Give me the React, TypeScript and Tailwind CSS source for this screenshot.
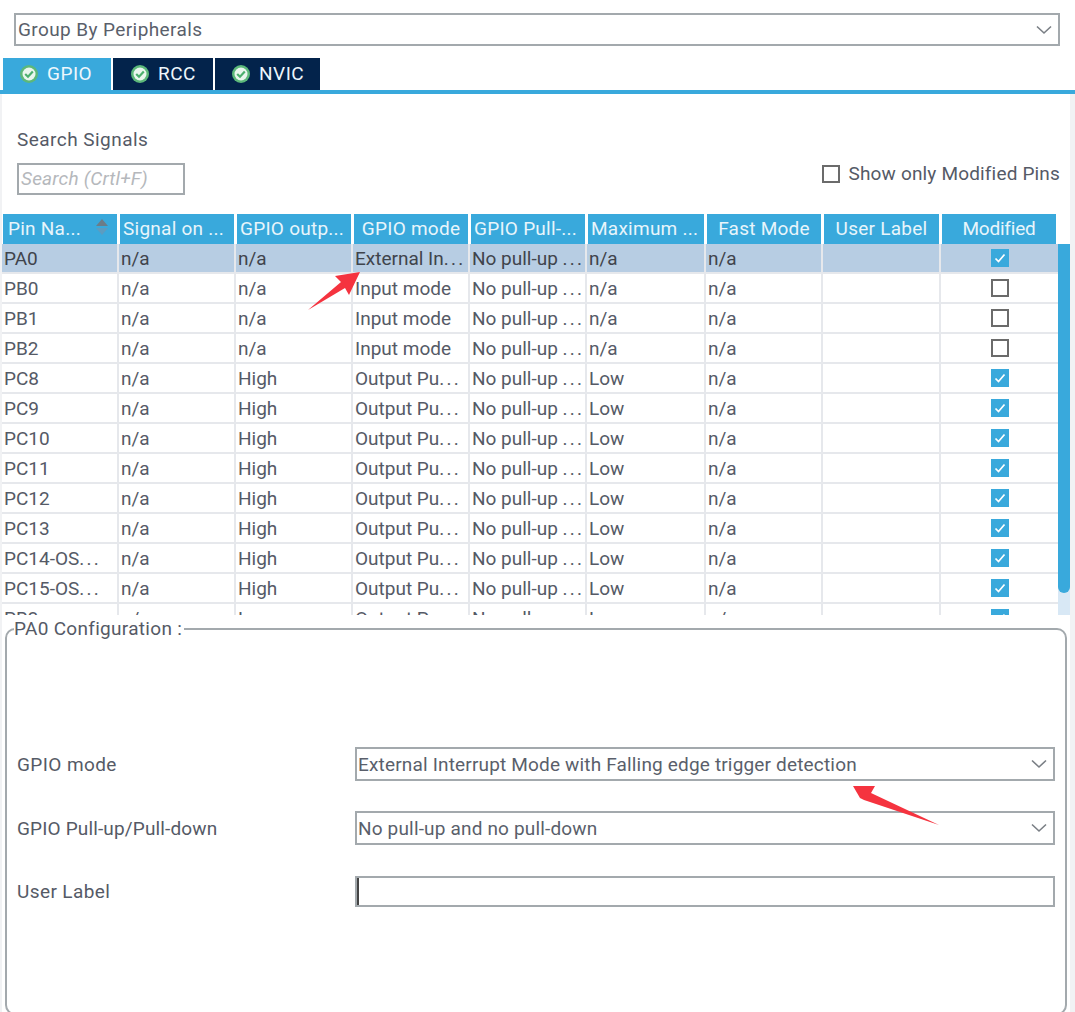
import React from "react";

const Chevron = () => (
  <svg width="18" height="10" viewBox="0 0 18 10" fill="none" stroke="#7a7f85" strokeWidth="1.6">
    <path d="M2 1.5 L9 8 L16 1.5" />
  </svg>
);

const TabIcon = () => (
  <svg width="18" height="18" viewBox="0 0 18 18">
    <circle cx="9" cy="9" r="9" fill="#5cb87a" />
    <circle cx="9" cy="9" r="6.5" fill="#eaf6ee" />
    <path d="M5.2 9 L8 11.7 L12.8 6.6" fill="none" stroke="#4caf6e" strokeWidth="2.2" />
  </svg>
);

const Check = ({ on }: { on: boolean }) =>
  on ? (
    <span className="flex h-[18px] w-[18px] items-center justify-center bg-[#39a9dc]">
      <svg width="14" height="14" viewBox="0 0 14 14" fill="none" stroke="#fff" strokeWidth="1.7">
        <path d="M2.5 7.5 L5.5 10.5 L11.5 3.5" />
      </svg>
    </span>
  ) : (
    <span className="block h-[18px] w-[18px] border-2 border-[#6b6b6b] bg-white" />
  );

const Select = ({ text, className, tracking }: { text: string; className: string; tracking: string }) => (
  <div className={"flex items-center justify-between border-2 border-[#a3a9ad] bg-white pr-[5px] text-[#5a5f6b] " + className}>
    <span className={tracking}>{text}</span>
    <Chevron />
  </div>
);

const Trunc = ({ t }: { t: string }) =>
  t.endsWith("...") ? (
    <>
      {t.slice(0, -3)}
      <span className="tracking-[2.2px]">...</span>
    </>
  ) : (
    <>{t}</>
  );

const widths = ["w-[117px]", "w-[117px]", "w-[117px]", "w-[117px]", "w-[117px]", "w-[119px]", "w-[117px]", "w-[118px]", "w-[117px]"];
const heads = ["Pin Na...", "Signal on ...", "GPIO outp...", "GPIO mode", "GPIO Pull-...", "Maximum ...", "Fast Mode", "User Label", "Modified"];

const out = "Output Pu...";
const pull = "No pull-up ...";
const rows: [string, string, string, string, string, boolean][] = [
  ["PA0", "n/a", "External In...", pull, "n/a", true],
  ["PB0", "n/a", "Input mode", pull, "n/a", false],
  ["PB1", "n/a", "Input mode", pull, "n/a", false],
  ["PB2", "n/a", "Input mode", pull, "n/a", false],
  ["PC8", "High", out, pull, "Low", true],
  ["PC9", "High", out, pull, "Low", true],
  ["PC10", "High", out, pull, "Low", true],
  ["PC11", "High", out, pull, "Low", true],
  ["PC12", "High", out, pull, "Low", true],
  ["PC13", "High", out, pull, "Low", true],
  ["PC14-OS...", "High", out, pull, "Low", true],
  ["PC15-OS...", "High", out, pull, "Low", true],
  ["PB3", "Low", out, pull, "Low", true],
];

export default function App() {
  return (
    <div className="relative h-[1012px] w-[1075px] overflow-hidden bg-white text-[19px] leading-[24px] text-[#555a66]" style={{ fontFamily: "Roboto, 'Liberation Sans', sans-serif" }}>
      <div className="pl-[14px] pt-[13px]">
        <Select text="Group By Peripherals" tracking="tracking-[0.4px]" className="h-[33px] w-[1046px] pl-[2px]" />
      </div>
      <div className="mt-[12px] flex gap-[2px] pl-[3px] tracking-[0.5px] text-[#eef7fc]">
        <div className="flex h-[32px] w-[108px] items-center gap-[9px] bg-[#39a9dc] pl-[17px]"><TabIcon /><span>GPIO</span></div>
        <div className="flex h-[32px] w-[100px] items-center gap-[9px] bg-[#03234b] pl-[18px]"><TabIcon /><span>RCC</span></div>
        <div className="flex h-[32px] w-[105px] items-center gap-[9px] bg-[#03234b] pl-[17px]"><TabIcon /><span>NVIC</span></div>
      </div>
      <div className="h-[4px] bg-[#39a9dc]" />

      <div className="h-[918px] border-l-2 border-r-[5px] border-[#f1f2f4]">
        <div className="flex h-[120px] justify-between pl-[15px] pr-[10px]">
          <div className="pt-[34px]">
            <div className="tracking-[0.46px]">Search Signals</div>
            <div className="mt-[11px] flex h-[32px] w-[168px] items-center border-2 border-[#a3a9ad] pl-[2px] italic tracking-[0.2px] text-[#b5b8bc]">Search (Crtl+F)</div>
          </div>
          <label className="mt-[68px] flex h-[24px] items-center gap-[8px]">
            <span className="block h-[18px] w-[18px] border-2 border-[#6b6b6b]" />
            <span className="tracking-[0.17px]">Show only Modified Pins</span>
          </label>
        </div>

        <div className="relative h-[401px] overflow-hidden">
          <div className="ml-[1px] flex h-[30px] w-[1056px]">
            {heads.map((h, i) => (
              <div key={h} className={"relative flex items-center overflow-hidden whitespace-nowrap border-r-[3px] border-white bg-[#39a9dc] text-[#e8f5fb] " + widths[i] + (i === 8 ? " tracking-[-0.2px]" : " tracking-[0.25px]") + (i === 0 ? " pl-[5px]" : i === 3 || i === 6 || i === 7 || i === 8 ? " justify-center" : " pl-[3px]")}>
                {h}
                {i === 0 && (
                  <svg className="absolute right-[9px] top-[5px]" width="12" height="17" viewBox="0 0 12 17">
                    <path d="M6 0 L12 7 H0 Z" fill="#6b7c88" />
                    <path d="M6 16 L12 9 H0 Z" fill="#5c9cc0" />
                  </svg>
                )}
              </div>
            ))}
          </div>
          {rows.map((r, idx) => (
            <div key={r[0]} className={"flex h-[30px] w-[1056px] border-b-2 border-[#e6e8ec] " + (idx === 0 ? "bg-[#b7cde3] text-[#3f444c]" : "text-[#555a66]")}>
              {[r[0], "n/a", r[1], r[2], r[3], r[4], "n/a", ""].map((c, i) => (
                <div key={i} className={"overflow-hidden whitespace-nowrap border-r-2 border-[#e6e8ec] pl-[2px] leading-[29px] " + widths[i]}><Trunc t={c} /></div>
              ))}
              <div className="flex w-[117px] items-center justify-center">
                <Check on={r[5]} />
              </div>
            </div>
          ))}
          <div className="absolute bottom-0 left-[1056px] top-[30px] w-[12px] bg-[#d8e8f5]">
            <div className="h-[349px] rounded-b-full rounded-t-[6px] bg-[#39a9dc]" />
          </div>
        </div>

        <fieldset className="ml-[3px] mt-[2px] h-[398px] w-[1062px] rounded-[10px] border-2 border-[#a3a9ad] pl-[7px] pr-[10px]">
          <legend className="pr-[2px] tracking-[0.3px]">PA0 Configuration :</legend>
          <div className="mt-[106px] grid grid-cols-[341px_700px] items-center gap-y-[30px] text-[#555a66]">
            <span className="pl-[3px] pt-[2px] tracking-[0.4px]">GPIO mode</span>
            <Select text="External Interrupt Mode with Falling edge trigger detection" tracking="pt-[1px] tracking-[0.17px]" className="h-[34px] w-[700px] pl-[1px]" />
            <span className="pl-[3px] pt-[2px] tracking-[0.15px]">GPIO Pull-up/Pull-down</span>
            <Select text="No pull-up and no pull-down" tracking="pt-[1px] tracking-[0.17px]" className="h-[34px] w-[700px] pl-[1px]" />
            <span className="pl-[3px] pt-[2px] tracking-[0.4px]">User Label</span>
            <div className="mt-[1px] h-[31px] w-[700px] border-2 border-[#a3a9ad] shadow-[inset_2px_0_0_#444]" />
          </div>
        </fieldset>
      </div>

      <svg className="pointer-events-none absolute left-0 top-0" width="1075" height="1012">
        <path d="M308 310 L341 282 L335 276 L360 272 L349 295 L345 288 Z" fill="#f5333f" />
        <path d="M853 786 L875 786 L871 793 L939 825 L864 800 L860 798 L853 786 Z" fill="#f5333f" />
      </svg>
    </div>
  );
}
